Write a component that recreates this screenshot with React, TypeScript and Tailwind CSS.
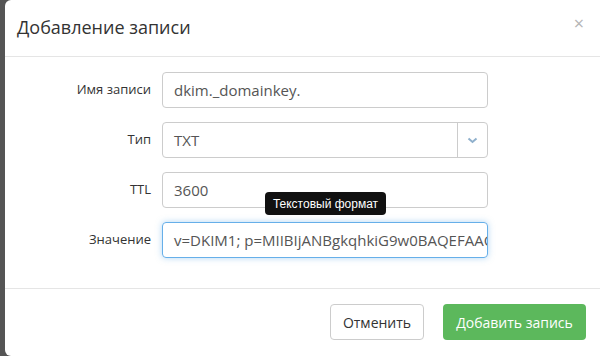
import React from "react";

const font = { fontFamily: '"Open Sans", "Noto Sans", sans-serif' };

function Row({ label, children }: { label: string; children: React.ReactNode }) {
  return (
    <div className="flex items-center h-[36px]">
      <div className="w-[146px] text-right text-[13px] font-medium text-[#333]">{label}</div>
      <div className="ml-[11px] w-[326px] h-[36px]">{children}</div>
    </div>
  );
}

export default function App() {
  return (
    <div className="w-[600px] h-[356px] flex bg-[#555] overflow-hidden" style={font}>
      <div className="w-[5px]" />
      <div className="relative flex-1 bg-white rounded-l-[6px] flex flex-col">
        <div className="h-[57px] border-b border-[#e5e5e5] flex items-center pl-[12px] pr-[16px]">
          <div className="text-[18px] text-[#333] leading-none pb-[2px]">Добавление записи</div>
          <div className="ml-auto text-[#b5b5b5] text-[18px] leading-none pb-[10px]">×</div>
        </div>
        <div className="pt-[15px] flex flex-col gap-[14px] h-[232px] border-b border-[#e5e5e5]">
          <Row label="Имя записи">
            <div className="h-full border border-[#ccc] rounded-[4px] flex items-center pl-[11px] text-[15px] text-[#555]">
              dkim._domainkey.
            </div>
          </Row>
          <Row label="Тип">
            <div className="h-full border border-[#ccc] rounded-[4px] flex items-center text-[15px] text-[#555]">
              <div className="flex-1 pl-[11px]">TXT</div>
              <div className="w-[30px] h-full border-l border-[#ccc] flex items-center justify-center">
                <svg width="11" height="7" viewBox="0 0 11 7">
                  <path d="M1.5 1.5 L5.5 5 L9.5 1.5" fill="none" stroke="#8fb0cc" strokeWidth="2" />
                </svg>
              </div>
            </div>
          </Row>
          <Row label="TTL">
            <div className="h-full border border-[#ccc] rounded-[4px] flex items-center pl-[11px] text-[15px] text-[#555]">
              3600
            </div>
          </Row>
          <Row label="Значение">
            <div className="h-full border border-[#66afe9] rounded-[4px] flex items-center pl-[11px] pr-[10px] text-[15px] text-[#555] overflow-hidden whitespace-nowrap shadow-[0_0_6px_rgba(102,175,233,0.5)]">
              <span>v=DKIM1</span>
              <span className="inline-block w-[1px] h-[19px] bg-[#222]" />
              <span>; p=MIIBIjANBgkqhkiG9w0BAQEFAAOC</span>
            </div>
          </Row>
        </div>
        <div className="flex justify-end gap-[19px] pt-[15px] pr-[14px]">
          <div className="w-[94px] h-[36px] border border-[#ccc] rounded-[4px] flex items-center justify-center text-[14px] text-[#333]">
            Отменить
          </div>
          <div className="w-[143px] h-[36px] bg-[#5cb85c] rounded-[4px] flex items-center justify-center text-[14px] text-white">
            Добавить запись
          </div>
        </div>
        <div
          className="absolute left-[260px] top-[192px] w-[121px] h-[23px] bg-[#111] rounded-[4px] text-white text-[12px] flex items-center justify-center"
          style={{ fontFamily: '"Liberation Sans", Arial, sans-serif' }}
        >
          Текстовый формат
        </div>
      </div>
    </div>
  );
}
